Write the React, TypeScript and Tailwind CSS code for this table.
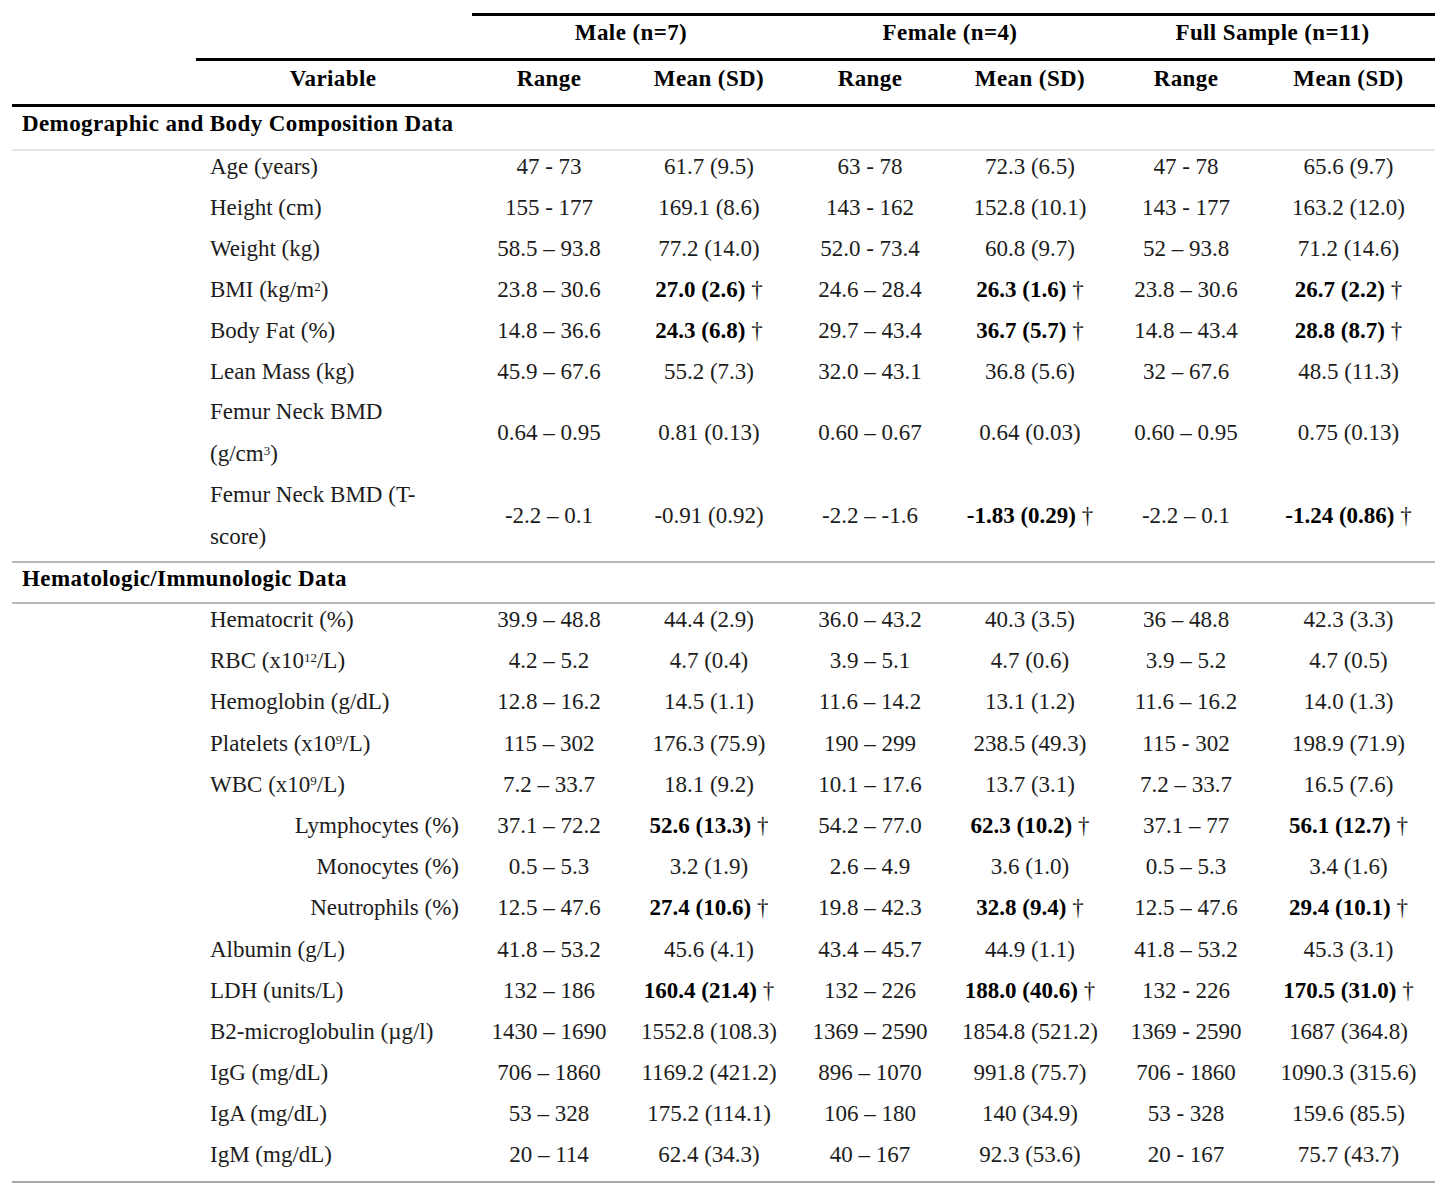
import React from 'react';

type Row = {
  label: React.ReactNode;
  cells: string[];
  align?: 'left' | 'right';
  twoLine?: boolean;
};

const COLS = 'grid grid-cols-[184px_274px_158px_162px_160px_160px_152px_173px]';

const DEMOGRAPHIC: Row[] = [
  { label: 'Age (years)', cells: ['47 - 73', '61.7 (9.5)', '63 - 78', '72.3 (6.5)', '47 - 78', '65.6 (9.7)'] },
  { label: 'Height (cm)', cells: ['155 - 177', '169.1 (8.6)', '143 - 162', '152.8 (10.1)', '143 - 177', '163.2 (12.0)'] },
  { label: 'Weight (kg)', cells: ['58.5 – 93.8', '77.2 (14.0)', '52.0 - 73.4', '60.8 (9.7)', '52 – 93.8', '71.2 (14.6)'] },
  {
    label: (
      <>
        BMI (kg/m<sup className="text-[13px]">2</sup>)
      </>
    ),
    cells: ['23.8 – 30.6', '!27.0 (2.6)', '24.6 – 28.4', '!26.3 (1.6)', '23.8 – 30.6', '!26.7 (2.2)'],
  },
  { label: 'Body Fat (%)', cells: ['14.8 – 36.6', '!24.3 (6.8)', '29.7 – 43.4', '!36.7 (5.7)', '14.8 – 43.4', '!28.8 (8.7)'] },
  { label: 'Lean Mass (kg)', cells: ['45.9 – 67.6', '55.2 (7.3)', '32.0 – 43.1', '36.8 (5.6)', '32 – 67.6', '48.5 (11.3)'] },
  {
    label: (
      <>
        Femur Neck BMD
        <br />
        (g/cm<sup className="text-[13px]">3</sup>)
      </>
    ),
    cells: ['0.64 – 0.95', '0.81 (0.13)', '0.60 – 0.67', '0.64 (0.03)', '0.60 – 0.95', '0.75 (0.13)'],
    twoLine: true,
  },
  {
    label: (
      <>
        Femur Neck BMD (T-
        <br />
        score)
      </>
    ),
    cells: ['-2.2 – 0.1', '-0.91 (0.92)', '-2.2 – -1.6', '!-1.83 (0.29)', '-2.2 – 0.1', '!-1.24 (0.86)'],
    twoLine: true,
  },
];

const HEMATOLOGIC: Row[] = [
  { label: 'Hematocrit (%)', cells: ['39.9 – 48.8', '44.4 (2.9)', '36.0 – 43.2', '40.3 (3.5)', '36 – 48.8', '42.3 (3.3)'] },
  {
    label: (
      <>
        RBC (x10<sup className="text-[13px]">12</sup>/L)
      </>
    ),
    cells: ['4.2 – 5.2', '4.7 (0.4)', '3.9 – 5.1', '4.7 (0.6)', '3.9 – 5.2', '4.7 (0.5)'],
  },
  { label: 'Hemoglobin (g/dL)', cells: ['12.8 – 16.2', '14.5 (1.1)', '11.6 – 14.2', '13.1 (1.2)', '11.6 – 16.2', '14.0 (1.3)'] },
  {
    label: (
      <>
        Platelets (x10<sup className="text-[13px]">9</sup>/L)
      </>
    ),
    cells: ['115 – 302', '176.3 (75.9)', '190 – 299', '238.5 (49.3)', '115 - 302', '198.9 (71.9)'],
  },
  {
    label: (
      <>
        WBC (x10<sup className="text-[13px]">9</sup>/L)
      </>
    ),
    cells: ['7.2 – 33.7', '18.1 (9.2)', '10.1 – 17.6', '13.7 (3.1)', '7.2 – 33.7', '16.5 (7.6)'],
  },
  { label: 'Lymphocytes (%)', align: 'right', cells: ['37.1 – 72.2', '!52.6 (13.3)', '54.2 – 77.0', '!62.3 (10.2)', '37.1 – 77', '!56.1 (12.7)'] },
  { label: 'Monocytes (%)', align: 'right', cells: ['0.5 – 5.3', '3.2 (1.9)', '2.6 – 4.9', '3.6 (1.0)', '0.5 – 5.3', '3.4 (1.6)'] },
  { label: 'Neutrophils (%)', align: 'right', cells: ['12.5 – 47.6', '!27.4 (10.6)', '19.8 – 42.3', '!32.8 (9.4)', '12.5 – 47.6', '!29.4 (10.1)'] },
  { label: 'Albumin (g/L)', cells: ['41.8 – 53.2', '45.6 (4.1)', '43.4 – 45.7', '44.9 (1.1)', '41.8 – 53.2', '45.3 (3.1)'] },
  { label: 'LDH (units/L)', cells: ['132 – 186', '!160.4 (21.4)', '132 – 226', '!188.0 (40.6)', '132 - 226', '!170.5 (31.0)'] },
  { label: 'B2-microglobulin (µg/l)', cells: ['1430 – 1690', '1552.8 (108.3)', '1369 – 2590', '1854.8 (521.2)', '1369 - 2590', '1687 (364.8)'] },
  { label: 'IgG (mg/dL)', cells: ['706 – 1860', '1169.2 (421.2)', '896 – 1070', '991.8 (75.7)', '706 - 1860', '1090.3 (315.6)'] },
  { label: 'IgA (mg/dL)', cells: ['53 – 328', '175.2 (114.1)', '106 – 180', '140 (34.9)', '53 - 328', '159.6 (85.5)'] },
  { label: 'IgM (mg/dL)', cells: ['20 – 114', '62.4 (34.3)', '40 – 167', '92.3 (53.6)', '20 - 167', '75.7 (43.7)'] },
];

function Value({ text }: { text: string }) {
  if (text.startsWith('!')) {
    return (
      <span>
        <b className="font-bold text-black">{text.slice(1)}</b> †
      </span>
    );
  }
  return <span>{text}</span>;
}

function DataRow({ row, height }: { row: Row; height: string }) {
  const cellPad = row.twoLine ? 'pt-[23px]' : 'pt-[3px]';
  return (
    <div className={`${COLS} ${height}`}>
      <div />
      {row.twoLine ? (
        <div className="pl-[14px]">
          <div className="-mt-[6px] leading-[42px]">{row.label}</div>
        </div>
      ) : (
        <div
          className={`${cellPad} leading-[26px] whitespace-nowrap ${
            row.align === 'right' ? 'pr-[11px] text-right' : 'pl-[14px]'
          }`}
        >
          {row.label}
        </div>
      )}
      {row.cells.map((c, i) => (
        <div key={i} className={`${cellPad} leading-[26px] text-center whitespace-nowrap`}>
          <Value text={c} />
        </div>
      ))}
    </div>
  );
}

export default function App() {
  return (
    <div className="min-h-[1202px] bg-white pl-[12px] pt-[13px] font-['Liberation_Serif','Times_New_Roman',serif] text-[23px] text-[#1c1c1c]">
      <div className="w-[1423px]">
        {/* group header */}
        <div className="flex">
          <div className="w-[460px]" />
          <div className="grid flex-1 grid-cols-[318px_320px_325px] border-t-[3px] border-black pt-[4px] pb-[12px] text-center font-bold leading-[26px] tracking-[0.4px] text-black">
            <div>Male (n=7)</div>
            <div>Female (n=4)</div>
            <div>Full Sample (n=11)</div>
          </div>
        </div>
        {/* column header */}
        <div className="flex border-b-[3px] border-black">
          <div className="w-[184px]" />
          <div className="grid flex-1 grid-cols-[274px_158px_162px_160px_160px_152px_173px] border-t-[3px] border-black pt-[5px] pb-[12px] text-center font-bold leading-[26px] tracking-[0.4px] text-black">
            <div>Variable</div>
            <div>Range</div>
            <div>Mean (SD)</div>
            <div>Range</div>
            <div>Mean (SD)</div>
            <div>Range</div>
            <div>Mean (SD)</div>
          </div>
        </div>

        <div className="h-[44px] border-b-2 border-[#e6e6e6] pl-[10px] pt-[4px] leading-[26px] font-bold tracking-[0.4px] text-black">
          Demographic and Body Composition Data
        </div>
        {DEMOGRAPHIC.map((r, i) => (
          <DataRow
            key={i}
            row={r}
            height={r.twoLine ? (i === DEMOGRAPHIC.length - 1 ? 'h-[81px]' : 'h-[83px]') : 'h-[41px]'}
          />
        ))}

        <div className="border-t-2 border-[#b8b8b8]" />
        <div className="h-[41px] border-b-2 border-[#b8b8b8] pl-[10px] pt-[3px] leading-[26px] font-bold tracking-[0.4px] text-black">
          Hematologic/Immunologic Data
        </div>
        {HEMATOLOGIC.map((r, i) => (
          <DataRow key={i} row={r} height="h-[41.2px]" />
        ))}
        <div className="border-t-2 border-[#a8a8a8]" />
      </div>
    </div>
  );
}
